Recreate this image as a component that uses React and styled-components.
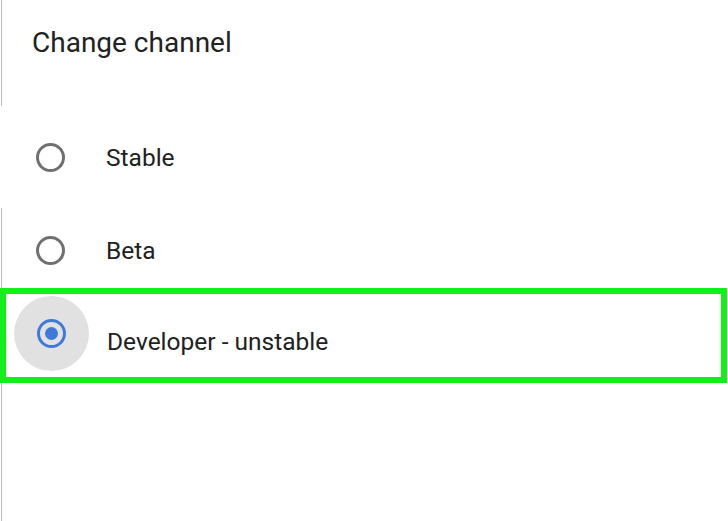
import React from 'react';
import styled, { createGlobalStyle } from 'styled-components';

const GlobalStyle = createGlobalStyle`
  html, body {
    margin: 0;
    padding: 0;
    background: #fff;
  }
  body {
    font-family: Roboto, "Noto Sans", Arial, sans-serif;
    color: #212121;
  }
`;

const Page = styled.div`
  width: 728px;
  height: 521px;
  display: flex;
  flex-direction: column;
  overflow: hidden;
  background: #fff;
`;

const Section = styled.div`
  margin-left: 1px;
  border-left: 1px solid ${props => (props.rule ? '#bdbdbd' : 'transparent')};
  box-sizing: border-box;
`;

const Header = styled(Section)`
  height: 106px;
  padding: 26px 0 0 30px;
`;

const Title = styled.h1`
  margin: 0;
  font-size: 28px;
  font-weight: 400;
  line-height: normal;
  color: #222;
`;

const Row = styled(Section)`
  height: ${props => props.h}px;
  padding: ${props => props.top || 0}px 0 0 34px;
  display: flex;
  align-items: center;
`;

const Radio = styled.span`
  position: relative;
  flex: none;
  width: 29px;
  height: 29px;
  border-radius: 50%;
  box-sizing: border-box;
  border: 3.5px solid ${props => (props.checked ? '#3f79d9' : '#707070')};

  &::after {
    content: '';
    display: ${props => (props.checked ? 'block' : 'none')};
    position: absolute;
    left: 50%;
    top: 50%;
    width: 13px;
    height: 13px;
    margin: -6.5px 0 0 -6.5px;
    border-radius: 50%;
    background: #3f79d9;
  }
`;

const Label = styled.span`
  margin-left: ${props => props.gap}px;
  margin-top: ${props => props.drop || 0}px;
  font-size: 24.5px;
  line-height: normal;
  color: #212121;
`;

const Highlight = styled.div`
  height: 95px;
  width: 727px;
  box-sizing: border-box;
  border: 6px solid #12f01a;
  padding-left: 8px;
  display: flex;
  align-items: flex-start;
`;

const Halo = styled.div`
  flex: none;
  width: 75px;
  height: 75px;
  margin-top: 2px;
  border-radius: 50%;
  background: #e1e1e1;
  display: flex;
  align-items: center;
  justify-content: center;
`;

const Rest = styled(Section)`
  flex: 1;
`;

export default function App() {
  return (
    <>
      <GlobalStyle />
      <Page>
        <Header rule>
          <Title>Change channel</Title>
        </Header>
        <Row h={102}>
          <Radio />
          <Label gap={41}>Stable</Label>
        </Row>
        <Row rule h={80} top={4}>
          <Radio />
          <Label gap={41}>Beta</Label>
        </Row>
        <Highlight>
          <Halo>
            <Radio checked />
          </Halo>
          <Label gap={18} drop={33}>Developer - unstable</Label>
        </Highlight>
        <Rest rule />
      </Page>
    </>
  );
}
